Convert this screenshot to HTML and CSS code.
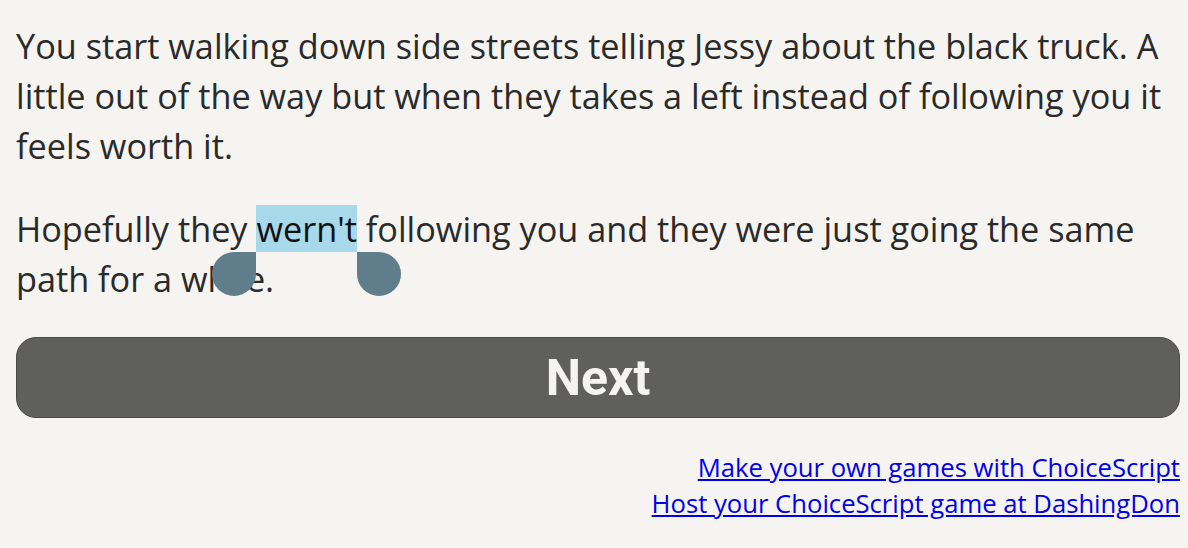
FILE: index.html
```html
<!DOCTYPE html>
<html>
<head>
<meta charset="utf-8">
<link rel="stylesheet" href="styles.css">
</head>
<body>
<div class="page">
  <div class="story">
    <p>You start walking down side streets telling Jessy about the black truck. A little out of the way but when they takes a left instead of following you it feels worth it.</p>
    <p>Hopefully they <span class="sel">wern't<span class="handle handle-left"></span><span class="handle handle-right"></span></span> following you and they were just going the same path for a while.</p>
  </div>
  <button class="next">Next</button>
  <div class="links">
    <a href="#">Make your own games with ChoiceScript</a>
    <a href="#">Host your ChoiceScript game at DashingDon</a>
  </div>
</div>
</body>
</html>
```

FILE: styles.css
```css
html, body {
  margin: 0;
  padding: 0;
  background: #f5f4f0;
}
.page {
  padding: 21px 8px 0 16px;
  font-family: "Open Sans", "Liberation Sans", sans-serif;
  color: #2a2a2a;
}
.story p {
  font-size: 34.25px;
  line-height: 50px;
  margin: 0 0 33px 0;
}
.sel {
  position: relative;
  background: #a8d9ea;
  color: #111;
}
.handle {
  position: absolute;
  top: 100%;
  width: 44px;
  height: 44px;
  background: #607d8b;
  border-radius: 50%;
}
.handle-left {
  right: 100%;
  border-top-right-radius: 0;
}
.handle-right {
  left: 100%;
  border-top-left-radius: 0;
}
.next {
  display: block;
  width: 100%;
  box-sizing: border-box;
  height: 81px;
  margin: 0;
  background: #5f5f5d;
  border: 1px solid #4a4a48;
  border-radius: 20px;
  color: #f5f4f0;
  font-family: Roboto, "Liberation Sans", sans-serif;
  font-weight: 700;
  font-size: 50px;
}
.links {
  margin-top: 32px;
  display: flex;
  flex-direction: column;
  align-items: flex-end;
  font-size: 25.65px;
  line-height: 36px;
}
.links a {
  color: #0000ee;
}
```
